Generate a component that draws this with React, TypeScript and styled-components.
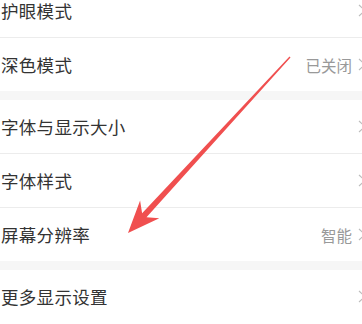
import styled, { createGlobalStyle } from 'styled-components';

const Global = createGlobalStyle`
  html, body {
    margin: 0;
    padding: 0;
    background: #fff;
    overflow: hidden;
  }
  body {
    font-family: "Noto Sans CJK SC", "Noto Sans", sans-serif;
  }
`;

const Screen = styled.div`
  position: relative;
  width: 362px;
  height: 324px;
  overflow: hidden;
  background: #fff;
`;

const List = styled.div`
  width: 366px;
  margin-top: -16px;
`;

const Group = styled.div`
  background: #fff;
`;

const Band = styled.div`
  height: 9px;
  background: #f6f6f6;
`;

const Row = styled.div<{ last?: boolean }>`
  display: flex;
  align-items: center;
  justify-content: space-between;
  height: 53px;
  padding-left: 1px;
  border-bottom: ${({ last }) => (last ? 'none' : '1px solid #ececec')};
`;

const Label = styled.span`
  font-size: 17.5px;
  color: #333;
  letter-spacing: 0.3px;
`;

const Right = styled.div`
  display: flex;
  align-items: center;
  gap: 6px;
`;

const Value = styled.span`
  font-size: 15.5px;
  color: #999;
`;

const Chevron = () => (
  <svg width="8" height="13" viewBox="0 0 8 13">
    <path d="M1 1 L7 6.5 L1 12" fill="none" stroke="#bdbdbd" strokeWidth="1.2" />
  </svg>
);

const Arrow = styled.svg`
  position: absolute;
  left: 0;
  top: 0;
  pointer-events: none;
`;

type Item = { label: string; value?: string };

const groups: Item[][] = [
  [{ label: '护眼模式' }, { label: '深色模式', value: '已关闭' }],
  [{ label: '字体与显示大小' }, { label: '字体样式' }, { label: '屏幕分辨率', value: '智能' }],
  [{ label: '更多显示设置' }],
];

export default function App() {
  return (
    <Screen>
      <Global />
      <List>
        {groups.map((g, gi) => (
          <div key={gi}>
            {gi > 0 && <Band />}
            <Group>
              {g.map((item, i) => (
                <Row key={item.label} last={i === g.length - 1}>
                  <Label>{item.label}</Label>
                  <Right>
                    {item.value && <Value>{item.value}</Value>}
                    <Chevron />
                  </Right>
                </Row>
              ))}
            </Group>
          </div>
        ))}
      </List>
      <Arrow width="362" height="324" viewBox="0 0 362 324">
        <polygon
          points="290.5,57.5 146.5,217.3 159.3,218.2 128,233 140.1,200.6 142.1,213.3 289.5,56.5"
          fill="#f04f4f"
        />
      </Arrow>
    </Screen>
  );
}
